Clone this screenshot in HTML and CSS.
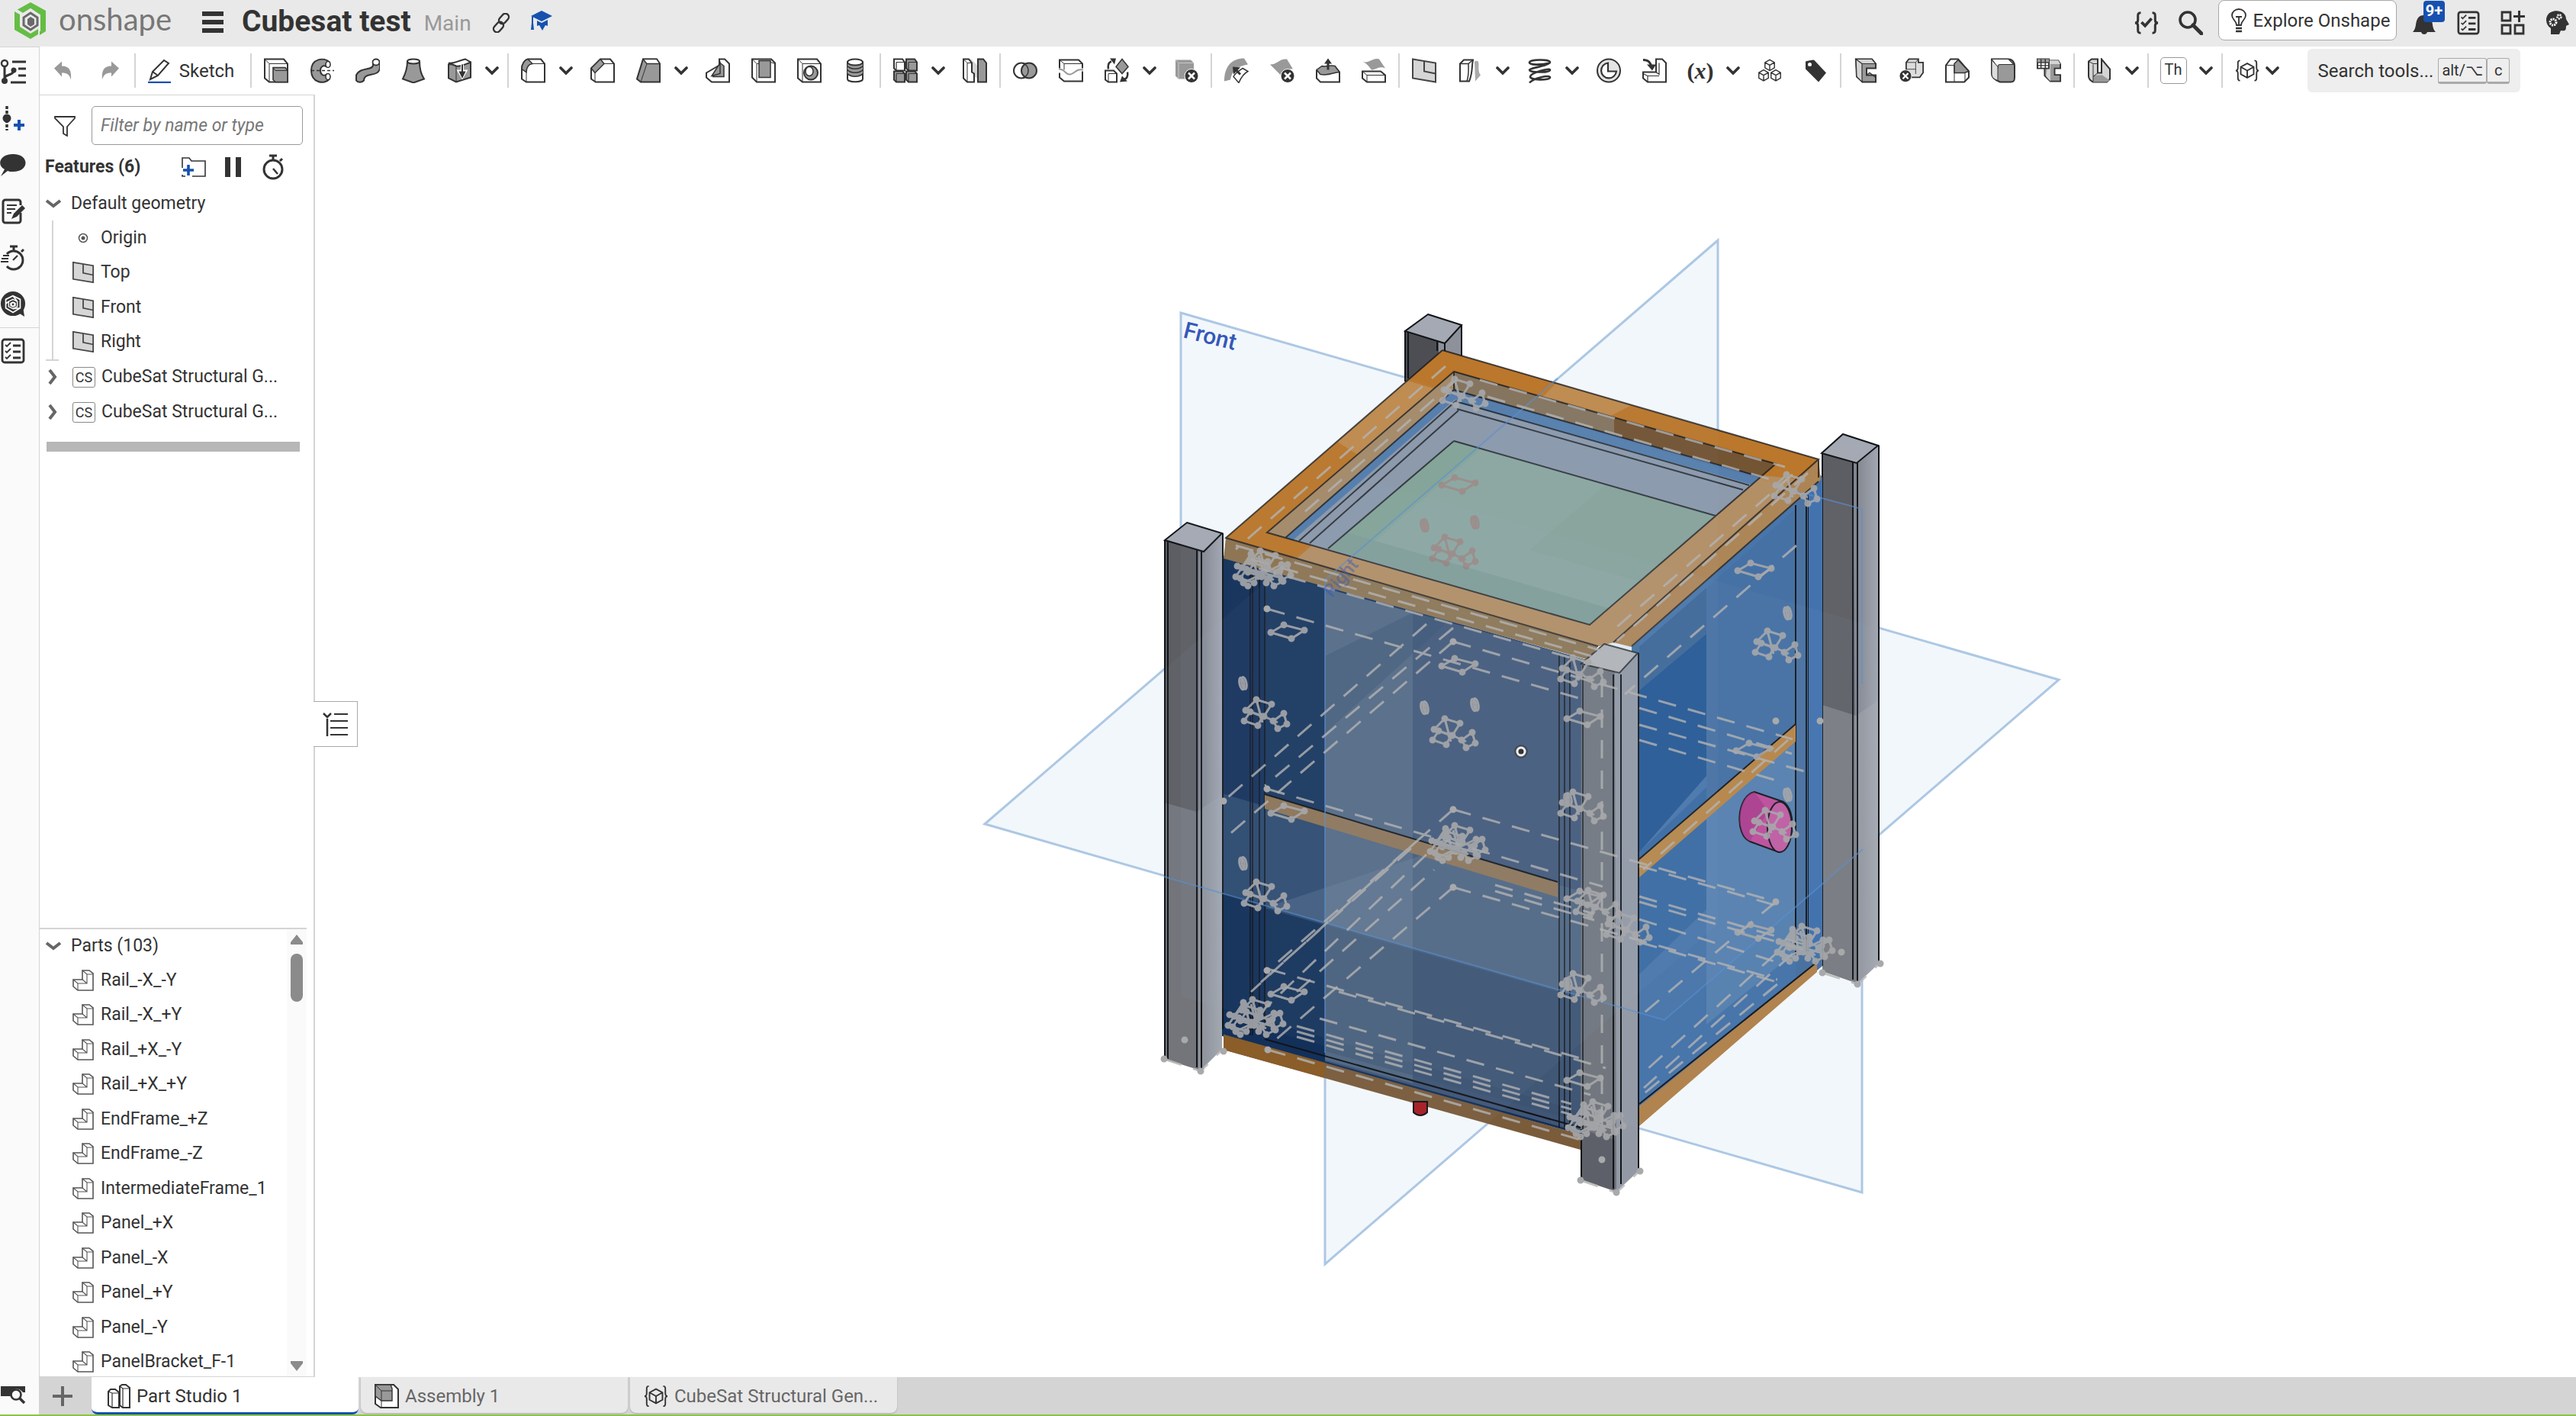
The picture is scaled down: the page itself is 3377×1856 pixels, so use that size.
FILE: index.html
```html
<!DOCTYPE html>
<html lang="en">
<head>
<meta charset="utf-8">
<title>Cubesat test | Part Studio 1</title>
<link rel="stylesheet" href="styles.css">
</head>
<body>
<svg class="defs" aria-hidden="true">
<defs>
<symbol id="i-caret" viewBox="0 0 18 12"><path d="M2 2l7 7 7-7" fill="none" stroke="#333" stroke-width="3.6" stroke-linecap="round"/></symbol>
<symbol id="i-undo" viewBox="0 0 32 32"><path d="M4 13L14 4v6c10 0 13 6 12 18-2-7-5-9-12-9v5z" fill="#999"/></symbol>
<symbol id="i-redo" viewBox="0 0 32 32"><path d="M28 13L18 4v6C8 10 5 16 6 28c2-7 5-9 12-9v5z" fill="#999"/></symbol>
<symbol id="i-pencil" viewBox="0 0 32 32"><path d="M4 27l3-10L22 2l6 4-14 16zM7 17l7 5" fill="#fff" stroke="#333" stroke-width="2"/><path d="M1 31h30" stroke="#1651b0" stroke-width="2.5"/></symbol>
<symbol id="i-extrude" viewBox="0 0 32 32"><path d="M1 1h25l5 6v24H7l-6-5z" fill="#fff" stroke="#333" stroke-width="2"/><path d="M1 1l6 6h24M7 7v24" fill="none" stroke="#333"/><path d="M12 12h16l3 4v15H15l-3-3z" fill="#999" stroke="#333" stroke-width="1.6"/><path d="M12 12l3 4h16" fill="none" stroke="#333"/></symbol>
<symbol id="i-revolve" viewBox="0 0 32 32"><path d="M26 5C19-2 2 0 2 16s17 19 24 11l-4-6c-4 3-8 0-8-5s4-8 8-5z" fill="#999" stroke="#333" stroke-width="2"/><ellipse cx="24" cy="8" rx="3" ry="4" fill="#fff" stroke="#333" stroke-width="1.6"/><ellipse cx="24" cy="24" rx="3" ry="4" fill="#fff" stroke="#333" stroke-width="1.6"/><path d="M2 16h30" stroke="#333" stroke-width="1.6" stroke-dasharray="4 3"/></symbol>
<symbol id="i-sweep" viewBox="0 0 32 32"><path d="M23 4v5c0 7-17 2-22 13v7c2 3 7 3 10 0 0-12 20-3 21-17V4z" fill="#999" stroke="#333" stroke-width="2"/><ellipse cx="27" cy="5" rx="4.500" ry="4" fill="#fff" stroke="#333" stroke-width="1.8"/></symbol>
<symbol id="i-loft" viewBox="0 0 32 32"><path d="M8 4c0 10-3 17-6 23l14 5 14-5c-4-6-6-13-6-23z" fill="#999" stroke="#333" stroke-width="2"/><ellipse cx="16" cy="4" rx="8" ry="3" fill="#fff" stroke="#333" stroke-width="2"/></symbol>
<symbol id="i-thicken" viewBox="0 0 32 32"><path d="M2 8v18l10 5 19-6V5z" fill="#999" stroke="#333" stroke-width="2"/><path d="M2 6c6 2 12-3 22-5l7 4c-8 3-12 6-19 5z" fill="#fff" stroke="#333" stroke-width="2"/><path d="M12 10v21" stroke="#333"/><path d="M20 8v14m-4-5l4 7 4-7z" stroke="#fff" stroke-width="4" fill="#fff"/><path d="M20 8v12m-3-2h6l-3 6z" stroke="#333" stroke-width="2" fill="#333"/></symbol>
<symbol id="i-fillet" viewBox="0 0 32 32"><path d="M9 1h17l5 6v24H7l-6-4V14C1 7 5 2 9 1z" fill="#fff" stroke="#333" stroke-width="2"/><path d="M9 1l6 6C9 8 7 13 7 18l-6-4C1 7 5 2 9 1z" fill="#999" stroke="#333" stroke-width="1.500"/><path d="M15 7h16M7 18v13" stroke="#333"/></symbol>
<symbol id="i-chamfer" viewBox="0 0 32 32"><path d="M13 1h13l5 6v24H7l-6-4V13z" fill="#fff" stroke="#333" stroke-width="2"/><path d="M13 1l5 6L6 19l-5-6z" fill="#999" stroke="#333" stroke-width="1.500"/><path d="M18 7h13M6 19v12" stroke="#333"/></symbol>
<symbol id="i-draft" viewBox="0 0 32 32"><path d="M9 1h18l4 6v24H6l-5-4z" fill="#999" stroke="#333" stroke-width="2"/><path d="M9 1l5 6h17l-4-6z" fill="#fff" stroke="#333" stroke-width="1.400"/><path d="M14 7L6 31" stroke="#333"/></symbol>
<symbol id="i-rib" viewBox="0 0 32 32"><path d="M18 1h7l6 6v24H8l-7-6v-6l17-10z" fill="#fff" stroke="#333" stroke-width="2"/><path d="M19 6v14L8 23zM19 6l5 4v14H9" fill="#999" stroke="#333" stroke-width="1.500"/></symbol>
<symbol id="i-shell" viewBox="0 0 32 32"><path d="M1 1h25l5 5v25H7l-6-6z" fill="#fff" stroke="#333" stroke-width="2"/><path d="M10 3h15v22H10z" fill="#999" stroke="#333" stroke-width="1.500"/><path d="M1 1l6 6v24M25 5l6 2M7 7h3" fill="none" stroke="#333"/></symbol>
<symbol id="i-hole" viewBox="0 0 32 32"><path d="M1 1h25l5 6v24H7l-6-5z" fill="#fff" stroke="#333" stroke-width="2"/><path d="M1 1l6 6h24M7 7v24" fill="none" stroke="#333"/><ellipse cx="18" cy="19" rx="9" ry="9" fill="#999" stroke="#333" stroke-width="2"/><ellipse cx="16" cy="17" rx="5" ry="6" fill="#fff" stroke="#333" stroke-width="1.500"/></symbol>
<symbol id="i-thread" viewBox="0 0 32 32"><path d="M6 5v22c0 5 20 5 20 0V5z" fill="#fff" stroke="#333" stroke-width="2"/><path d="M6 8v12c4 5 16 5 20 0V8z" fill="#999"/><ellipse cx="16" cy="5" rx="10" ry="4" fill="#fff" stroke="#333" stroke-width="2"/><path d="M6 10c4 5 16 5 20 0M6 15c4 5 16 5 20 0M6 20c4 5 16 5 20 0" fill="none" stroke="#333" stroke-width="1.600"/></symbol>
<symbol id="i-pattern" viewBox="0 0 32 32"><g stroke="#333" stroke-width="2"><path d="M1 1h11l3 4v11H4l-3-3z" fill="#fff"/><path d="M17 1h11l3 4v11H20l-3-3zM1 17h11l3 3v11H4l-3-3zM17 17h11l3 3v11H20l-3-3z" fill="#999"/></g><path d="M4 5h11M4 5v11M20 5h11M20 5v11M4 20h11M4 20v11M20 20h11M20 20v11" stroke="#333" stroke-width="1.200" fill="none"/></symbol>
<symbol id="i-mirror" viewBox="0 0 32 32"><path d="M10 0l12 12v16l-12-8z" fill="#d4d4d4"/><path d="M1 1h7l4 5v12l3 2v11H6l-5-5z" fill="#fff" stroke="#333" stroke-width="2"/><path d="M6 6v25M1 1l5 5h6" fill="none" stroke="#333"/><path d="M20 1h7l4 5v25H20z" fill="#999" stroke="#333" stroke-width="2"/></symbol>
<symbol id="i-boolean" viewBox="0 0 32 32"><circle cx="11" cy="16" r="10" fill="#fff" stroke="#333" stroke-width="2"/><circle cx="21" cy="16" r="10" fill="#999" stroke="#333" stroke-width="2"/><path d="M16 8a10 10 0 0 1 0 16" fill="none" stroke="#333" stroke-width="1.500"/></symbol>
<symbol id="i-split" viewBox="0 0 32 32"><path d="M1 13V2h25l5 5v6M1 19v6l6 5h24V17" fill="none" stroke="#333" stroke-width="2"/><path d="M1 2l6 5h24M7 7v8" fill="none" stroke="#333"/><path d="M0 14c9 0 8 8 15 7s7-8 17-6" fill="none" stroke="#999" stroke-width="2"/></symbol>
<symbol id="i-transform" viewBox="0 0 32 32"><path d="M23 1l8 10-8 9-8-9z" fill="#999" stroke="#333" stroke-width="1.500"/><path d="M1 16h11l4 4v11H5l-4-3z" fill="#fff" stroke="#333" stroke-width="2"/><path d="M5 20h11M5 20v11" stroke="#333"/><path d="M5 14c-1-6 1-9 4-10M30 18c1 5-1 9-4 9" fill="none" stroke="#333" stroke-width="2.500"/><path d="M7 0h8l-2 8zM20 31l3-8 7 7z" fill="#333"/></symbol>
<symbol id="i-delete" viewBox="0 0 32 32"><path d="M2 2h20l4 4v21H6l-4-4z" fill="#999"/><path d="M2 2l4 4h20M6 6v21" stroke="#c8c8c8" fill="none"/><circle cx="23" cy="23" r="9" fill="#333" stroke="#fff"/><path d="M19 19l8 8m0-8l-8 8" stroke="#fff" stroke-width="2.500"/></symbol>
<symbol id="i-moveface" viewBox="0 0 32 32"><path d="M0 30C0 10 10 0 26 0l5 8C18 10 10 16 8 28z" fill="#999"/><path d="M12 24c3-6 8-8 12-11l7 4c-6 3-9 8-12 15z" fill="#fff" stroke="#333" stroke-width="1.500"/><path d="M21 21L15 15" stroke="#333" stroke-width="3"/><path d="M11 11l10 1-9 9z" fill="#333"/></symbol>
<symbol id="i-deleteface" viewBox="0 0 32 32"><path d="M0 8c10 0 12-8 22-7l8 13c-8-2-8 10-16 8z" fill="#999"/><circle cx="23" cy="23" r="9" fill="#333" stroke="#fff"/><path d="M19 19l8 8m0-8l-8 8" stroke="#fff" stroke-width="2.500"/></symbol>
<symbol id="i-offsetface" viewBox="0 0 32 32"><path d="M1 16l6-4h19l5 6v13H6l-5-5z" fill="#fff" stroke="#333" stroke-width="2"/><path d="M1 15l7-5c5 2 9-2 17 0l6 8c-8 0-12 5-25 3z" fill="#999" stroke="#333" stroke-width="1.500"/><path d="M16 15V5" stroke="#333" stroke-width="3"/><path d="M11 7h10l-5-7z" fill="#333"/></symbol>
<symbol id="i-replaceface" viewBox="0 0 32 32"><path d="M1 4c8 4 14-6 22-3l8 12c-8-4-12 2-18 2C10 11 6 6 1 4z" fill="#999"/><path d="M1 17h24l6 5v9H7l-6-5z" fill="#fff" stroke="#333" stroke-width="2"/><path d="M1 17l6 5h24M7 22v9" stroke="#333" fill="none"/></symbol>
<symbol id="i-plane" viewBox="0 0 32 32"><path d="M1 1l30 5v25L1 26z" fill="#d6d6d6" stroke="#444" stroke-width="2"/><path d="M16 4v13l15 3" fill="none" stroke="#444" stroke-width="2"/></symbol>
<symbol id="i-ref" viewBox="0 0 32 32"><path d="M22 4c10-4 2 10 8 18l-7 8z" fill="#aaa"/><path d="M3 7l5-5h12c-2 9 0 16-5 28H3z" fill="#fff" stroke="#333" stroke-width="2"/><path d="M3 7h11l6-5M14 7c0 9 1 14-2 23" fill="none" stroke="#333" stroke-width="1.500"/></symbol>
<symbol id="i-helix" viewBox="0 0 32 32"><path d="M30 6C18 9 2 9 3 5s27-4 27 0-27 8-27 10 6 3 12 3 15 0 15-3-26 4-26 9 26 5 26 1-22 1-27 7" fill="none" stroke="#333" stroke-width="2.600"/></symbol>
<symbol id="i-clock" viewBox="0 0 32 32"><circle cx="16" cy="16" r="15" fill="#e4e4e4" stroke="#333" stroke-width="2"/><path d="M15 6a10 10 0 1 0 11 11H15z" fill="#fff" stroke="#333" stroke-width="2.200"/></symbol>
<symbol id="i-derive" viewBox="0 0 32 32"><path d="M18 1h8l5 5v25H7l-6-5v-8h11l6 0z" fill="#fff" stroke="#333" stroke-width="2"/><path d="M18 18l4 3V6M1 20l6 3h15M7 23v8" fill="none" stroke="#333" stroke-width="1.200"/><path d="M1 2c7 0 10 3 11 10" fill="none" stroke="#333" stroke-width="3"/><path d="M6 8h12l-5 8z" fill="#333"/></symbol>
<symbol id="i-cubes" viewBox="0 0 36 32"><g fill="#fff" stroke="#333" stroke-width="1.600"><path d="M18 0l7 4v8l-7 4-7-4V4zM11 4l7 4 7-4M18 8v8M9 15l7 4v8l-7 4-7-4v-8zM2 19l7 4 7-4M9 23v8M27 15l7 4v8l-7 4-7-4v-8zM20 19l7 4 7-4M27 23v8"/></g></symbol>
<symbol id="i-tag" viewBox="0 0 32 32"><path d="M3 4c4-1 7-2 11-2l16 17-10 12L3 14z" fill="#333"/><circle cx="8.500" cy="8" r="2.500" fill="#fff"/></symbol>
<symbol id="i-sheet" viewBox="0 0 32 32"><path d="M3 1h21l5 6v6H17v9h12v9H12l-8-7z" fill="#999" stroke="#333" stroke-width="2"/><path d="M3 1h21l5 6H11zM3 1l8 6v24l-7-7z" fill="#d4d4d4" stroke="#333" stroke-width="1.200"/><path d="M17 22l4-3 8 6" fill="none" stroke="#333" stroke-width="1.500"/></symbol>
<symbol id="i-sheetdel" viewBox="0 0 36 34"><path d="M10 5l4-5h14v5h7v15l-5 7H10z" fill="#ddd" stroke="#333" stroke-width="2"/><path d="M10 5h14l4-5M24 5v17M10 15h14" fill="none" stroke="#333"/><circle cx="9" cy="25" r="9" fill="#333" stroke="#fff"/><path d="M5 21l8 8m0-8l-8 8" stroke="#fff" stroke-width="2.500"/></symbol>
<symbol id="i-corner" viewBox="0 0 32 32"><path d="M1 9l6-8h10l14 16v8l-6 6H1z" fill="#fff" stroke="#333" stroke-width="2"/><path d="M12 7l5-5 14 15-6 2H12z" fill="#999" stroke="#333" stroke-width="1.500"/><path d="M1 9h11v22M12 19h14v12" fill="none" stroke="#333"/></symbol>
<symbol id="i-bend" viewBox="0 0 32 32"><path d="M1 1h22c5 0 8 4 8 9v15c0 4-1 6-5 6H12C4 28 1 24 1 20z" fill="#999" stroke="#333" stroke-width="2"/><path d="M1 1h22l7 7H12c-3 0-3 2-3 4L1 1z" fill="#fff" stroke="#333" stroke-width="1.200"/><path d="M1 2l8 9v18C3 27 1 24 1 20z" fill="#ddd" stroke="#333"/></symbol>
<symbol id="i-table" viewBox="0 0 34 32"><path d="M16 2h14l3 5v6h-8v9h8v9H19l-8-8V14z" fill="#999" stroke="#333" stroke-width="2"/><path d="M16 2h14l3 5H19v24l-6-7z" fill="#d4d4d4"/><path d="M1 0h16v13H1z" fill="#fff" stroke="#333" stroke-width="2"/><path d="M1 0h16v5H1z" fill="#999"/><path d="M1 5h16M1 9h16M6 0v13M12 0v13" stroke="#333" stroke-width="1.500"/></symbol>
<symbol id="i-frame" viewBox="0 0 32 32"><path d="M2 4l4-3h8v18h5V1l11 13v13l-4 4H8c-4-2-6-4-6-8z" fill="#d4d4d4" stroke="#333" stroke-width="2"/><path d="M8 22h12l10 7-4 2H8z" fill="#999"/><path d="M8 8v22M2 4l6 3h6M14 19l-6 5" fill="none" stroke="#333"/></symbol>
<symbol id="i-fcube" viewBox="0 0 34 30"><path d="M7 1C4 1 4 3 4 6v5c0 2-1 4-3 4 2 0 3 2 3 4v5c0 3 0 5 3 5M27 1c3 0 3 2 3 5v5c0 2 1 4 3 4-2 0-3 2-3 4v5c0 3 0 5-3 5" fill="none" stroke="#333" stroke-width="2"/><path d="M17 5l9 5v10l-9 5-9-5V10zM8 10l9 5 9-5M17 15v10" fill="none" stroke="#333" stroke-width="2"/></symbol>
<symbol id="i-check" viewBox="0 0 34 32"><path d="M9 2C5 2 5 4 5 7v5c0 2-1 4-4 4 3 0 4 2 4 4v5c0 3 0 5 4 5M25 2c4 0 4 2 4 5v5c0 2 1 4 4 4-3 0-4 2-4 4v5c0 3 0 5-4 5" fill="none" stroke="#333" stroke-width="3.200"/><path d="M10 15l5 5 9-10" fill="none" stroke="#333" stroke-width="4"/></symbol>
<symbol id="i-search" viewBox="0 0 32 32"><circle cx="12" cy="12" r="10" fill="none" stroke="#333" stroke-width="3.600"/><path d="M19 19l11 11" stroke="#333" stroke-width="5" stroke-linecap="round"/></symbol>
<symbol id="i-bulb" viewBox="0 0 20 32"><path d="M7 22c0-6-6-7-6-13a9 8 0 0 1 18 0c0 6-6 7-6 13zM6 11h8M10 11v11" fill="none" stroke="#333" stroke-width="1.800"/><path d="M6 26h8M6 30h8" stroke="#333" stroke-width="2.400"/></symbol>
<symbol id="i-bell" viewBox="0 0 32 32"><path d="M1 28c5-5 3-11 6-17 2-4 5-5 9-5s7 1 9 5c3 6 1 12 6 17H20c-1 4-7 4-8 0z" fill="#333"/></symbol>
<symbol id="i-list" viewBox="0 0 32 34"><rect x="2" y="2" width="28" height="30" rx="3" fill="none" stroke="#333" stroke-width="2.800"/><path d="M6 9l2 2 5-5M6 17l2 2 5-5M6 25l2 2 5-5" fill="none" stroke="#333" stroke-width="1.800"/><path d="M16 10h10M16 18h10M16 26h10" stroke="#333" stroke-width="3"/></symbol>
<symbol id="i-apps" viewBox="0 0 32 32"><path d="M2 2h11v11H2zM2 19h11v11H2zM19 19h11v11H19z" fill="none" stroke="#333" stroke-width="2.800"/><path d="M24.500 0v15M17 7.500h15" stroke="#333" stroke-width="3"/></symbol>
<symbol id="i-head" viewBox="0 0 32 32"><path d="M8 31v-8C0 18 0 6 8 2c8-4 20-1 20 9l4 7-4 2c0 6-1 7-7 6l-2 5z" fill="#333"/><circle cx="11" cy="15" r="4" fill="none" stroke="#fff" stroke-width="3" stroke-dasharray="2 1"/><circle cx="19" cy="8" r="2.500" fill="none" stroke="#fff" stroke-width="2.500" stroke-dasharray="2 1"/></symbol>
<symbol id="i-link" viewBox="0 0 26 26"><g fill="none" stroke="#333" stroke-width="2.400"><rect x="12" y="0" width="9" height="15" rx="4.500" transform="rotate(42 16.500 7.500)"/><rect x="5" y="11" width="9" height="15" rx="4.500" transform="rotate(42 9.500 18.500)"/></g></symbol>
<symbol id="i-grad" viewBox="0 0 28 26"><path d="M14 0l14 7-14 7L0 7z" fill="#1651b0"/><path d="M8 13l6 3 8-4v8l-3-1-4 7-4-7-3 1zM1 8h2v8l1 9H0l1-9z" fill="#1651b0"/></symbol>
<symbol id="i-tree" viewBox="0 0 34 32"><circle cx="6" cy="5" r="4" fill="none" stroke="#333" stroke-width="2.400"/><path d="M6 9v18M6 24c2-5 11-3 12-9" fill="none" stroke="#333" stroke-width="3"/><circle cx="6" cy="28" r="4" fill="#333"/><circle cx="18" cy="14" r="3.500" fill="#333"/><path d="M16 3h18M24 12h10M24 21h10M14 30h20" stroke="#333" stroke-width="3.200"/></symbol>
<symbol id="i-insert" viewBox="0 0 34 32"><path d="M9 0v32" stroke="#333" stroke-width="3.500" stroke-dasharray="4 2"/><circle cx="9" cy="16" r="5.500" fill="#333"/><path d="M25 18v14M18 25h14" stroke="#1651b0" stroke-width="4"/></symbol>
<symbol id="i-comment" viewBox="0 0 34 32"><path d="M17 2c22 0 22 23 0 23-3 0-5 0-7-1L1 31l5-9C-5 16 0 2 17 2z" fill="#333"/></symbol>
<symbol id="i-notes" viewBox="0 0 34 34"><path d="M27 19v10a3 3 0 0 1-3 3H7a3 3 0 0 1-3-3V5a3 3 0 0 1 3-3h17a3 3 0 0 1 3 3v4" fill="none" stroke="#333" stroke-width="3"/><path d="M9 9h13M9 14h11M9 19h6" stroke="#333" stroke-width="2.200"/><path d="M15 27l3-7L29 9l4 4-11 11z" fill="#333"/></symbol>
<symbol id="i-timer" viewBox="0 0 34 34"><circle cx="17" cy="20" r="12" fill="none" stroke="#333" stroke-width="3"/><path d="M12 2h10M17 2v6M26 9l3-3" stroke="#333" stroke-width="3"/><path d="M17 19l6 7" stroke="#333" stroke-width="2.500"/></symbol>
<symbol id="i-perf" viewBox="0 0 34 34"><path d="M9 12a12 12 0 1 1 0 16" fill="none" stroke="#333" stroke-width="3"/><path d="M13 2h10M18 2v5M28 9l3-3" stroke="#333" stroke-width="3"/><path d="M17 20l6-6M4 14h8M2 18h9M1 22h10" stroke="#333" stroke-width="2.200"/></symbol>
<symbol id="i-help" viewBox="0 0 34 36"><circle cx="17" cy="17" r="17" fill="#333"/><path d="M22 28l11 7-2-12z" fill="#333"/><path d="M17 6l10 5v12l-10 6-10-6V11zM17 6l6 8M27 23l-10 1M7 17l4-3" fill="none" stroke="#fff" stroke-width="1.800"/><path d="M17 11l6 3v7l-6 3-6-3v-7z" fill="none" stroke="#fff" stroke-width="1.500"/><path d="M17 14l4 2v4l-4 2-4-2v-4z" fill="#fff"/><circle cx="17" cy="18" r="1.500" fill="#333"/></symbol>
<symbol id="i-find" viewBox="0 0 34 26"><path d="M1 3h32v8h-3c-6-8-17-5-16 5H1z" fill="#333"/><circle cx="21" cy="14" r="6.500" fill="none" stroke="#333" stroke-width="2.600"/><path d="M26 19l6 6" stroke="#333" stroke-width="3.500"/></symbol>
<symbol id="i-filter" viewBox="0 0 28 28"><path d="M1 2h26v2L17 15v12l-5-3v-9L1 4z" fill="none" stroke="#333" stroke-width="1.800"/></symbol>
<symbol id="i-folder" viewBox="0 0 34 28"><path d="M2 15V2h9l3 4h18v20H15M2 24v2h4" fill="none" stroke="#333" stroke-width="1.600"/><path d="M10 11v14M3 18h14" stroke="#1651b0" stroke-width="3.600"/></symbol>
<symbol id="i-pause" viewBox="0 0 22 26"><path d="M0 0h7v26H0zM14 0h7v26h-7z" fill="#333"/></symbol>
<symbol id="i-part" viewBox="0 0 28 28"><path d="M13 1h9l5 4v22H7l-6-5v-9h12z" fill="#fff" stroke="#555" stroke-width="1.600"/><path d="M13 1l6 5h8M19 6v12H7l-6-5M7 18v9M13 13l6 5" fill="none" stroke="#555" stroke-width="1.100"/></symbol>
<symbol id="i-studio" viewBox="0 0 30 32"><path d="M1 10l3-3h6l5 4v20H6l-5-3zM16 3l3-2h5l5 4v26H20l-4-3z" fill="#fff" stroke="#333" stroke-width="2"/><path d="M1 10l5 2h9M6 12v19M16 3l4 3h9M20 6v25" fill="none" stroke="#333" stroke-width="1.200"/></symbol>
<symbol id="i-assembly" viewBox="0 0 32 32"><path d="M1 1h24l6 6v24H8l-7-5z" fill="#fff" stroke="#333" stroke-width="2"/><path d="M1 1h20l2 5v16H9l-8-6z" fill="#999" stroke="#333" stroke-width="1.400"/><path d="M1 1l8 8h14M9 9v22" fill="none" stroke="#333"/></symbol>
<symbol id="i-down" viewBox="0 0 22 12"><path d="M2 2l9 7 9-7" fill="none" stroke="#666" stroke-width="4"/></symbol>
<symbol id="i-right" viewBox="0 0 12 22"><path d="M2 2l7 9-7 9" fill="none" stroke="#666" stroke-width="4"/></symbol>

<g id="sq" class="wire"><path d="M-22 0L-5-10 22-3 5 8z"/><path class="dot" d="M-22 0h0M-5-10h0M22-3h0M5 8h0"/></g>
<g id="coil" class="wire"><ellipse cx="0" cy="0" rx="3" ry="8" transform="rotate(-12)"/><ellipse cx="3" cy="0" rx="3" ry="8" transform="rotate(-12)"/></g>
<g id="clus" class="wire"><path d="M-22-4L-8-18 12-12 2 4zM-24 10l8-12 16 6-6 12zM14 10l14-10 4 14-12 6zM-8-18l8 30M2 4l18 8"/><path class="dot" d="M-22-4h0M-8-18h0M12-12h0M2 4h0M-24 10h0M-16-2h0M0 4h0M-6 16h0M14 10h0M28 0h0M32 14h0M20 20h0"/></g>
<g id="dense" class="wire"><use href="#clus"/><use href="#clus" x="10" y="-8"/><path d="M-30 8l20-30M-20 16L30-8M0-20l10 36M-28-6l60 16"/><path class="dot" d="M-30 8h0M-10-22h0M-20 16h0M30-8h0M10 16h0M-28-6h0M-14 20h0"/></g>
<linearGradient id="steel"><stop offset="0" stop-color="#7e828b"/><stop offset="1" stop-color="#a2a7b1"/></linearGradient>
</defs>
</svg>

<header class="topbar">
  <a class="brand" href="#"><svg class="logo" viewBox="0 0 42 48"><path d="M21 0l20 11v27l-8 5V16L21 9 11 15l-8-5z" fill="#64bd45"/><path d="M0 12l7 4v16l14 9 10-6v7L21 48 0 36z" fill="#64bd45"/><path d="M3 10l8 5 10-6 12 8v21" fill="none" stroke="#e9e9e9" stroke-width="2"/><path d="M21 14l9 6v10l-9 6-9-6V20z" fill="none" stroke="#696969" stroke-width="3"/><path d="M21 19l5 3v7l-5 3-4-3v-7z" fill="#696969"/></svg><span>onshape</span></a>
  <button class="burger" aria-label="Menu"><i></i><i></i><i></i></button>
  <h1>Cubesat test</h1><span class="branch">Main</span>
  <button class="ib link" aria-label="Share link"><svg><use href="#i-link"/></svg></button>
  <button class="ib grad" aria-label="Education"><svg><use href="#i-grad"/></svg></button>
  <div class="topright">
    <button class="ib" aria-label="Custom features"><svg><use href="#i-check"/></svg></button>
    <button class="ib" aria-label="Search"><svg><use href="#i-search"/></svg></button>
    <button class="explore"><svg><use href="#i-bulb"/></svg>Explore Onshape</button>
    <button class="ib bell" aria-label="Notifications"><svg><use href="#i-bell"/></svg><b>9+</b></button>
    <button class="ib" aria-label="Tasks"><svg><use href="#i-list"/></svg></button>
    <button class="ib" aria-label="Apps"><svg><use href="#i-apps"/></svg></button>
    <button class="ib" aria-label="Account"><svg><use href="#i-head"/></svg></button>
  </div>
</header>

<div class="work">
<nav class="rail">
  <button aria-label="Feature list"><svg><use href="#i-tree"/></svg></button>
  <button aria-label="Insert"><svg><use href="#i-insert"/></svg></button>
  <button aria-label="Comments"><svg><use href="#i-comment"/></svg></button>
  <button aria-label="Notes"><svg><use href="#i-notes"/></svg></button>
  <button aria-label="Performance"><svg><use href="#i-perf"/></svg></button>
  <button aria-label="Advisor"><svg><use href="#i-help"/></svg></button>
  <button class="split" aria-label="Checklist"><svg><use href="#i-list"/></svg></button>
  <button class="last" aria-label="Find tabs"><svg><use href="#i-find"/></svg></button>
</nav>
<main>
<div class="tools" role="toolbar">
  <button class="t hist" aria-label="Undo"><svg><use href="#i-undo"/></svg></button><button class="t hist" aria-label="Redo"><svg><use href="#i-redo"/></svg></button><hr>
  <button class="sketch"><svg><use href="#i-pencil"/></svg>Sketch</button><hr>
  <button class="t" aria-label="Extrude"><svg><use href="#i-extrude"/></svg></button><button class="t" aria-label="Revolve"><svg><use href="#i-revolve"/></svg></button><button class="t" aria-label="Sweep"><svg><use href="#i-sweep"/></svg></button><button class="t" aria-label="Loft"><svg><use href="#i-loft"/></svg></button><button class="t" aria-label="Thicken"><svg><use href="#i-thicken"/></svg></button><button class="c" aria-label="More solids"><svg><use href="#i-caret"/></svg></button><hr>
  <button class="t" aria-label="Fillet"><svg><use href="#i-fillet"/></svg></button><button class="c" aria-label="More fillets"><svg><use href="#i-caret"/></svg></button><button class="t" aria-label="Chamfer"><svg><use href="#i-chamfer"/></svg></button><button class="t" aria-label="Draft"><svg><use href="#i-draft"/></svg></button><button class="c" aria-label="More drafts"><svg><use href="#i-caret"/></svg></button><button class="t" aria-label="Rib"><svg><use href="#i-rib"/></svg></button><button class="t" aria-label="Shell"><svg><use href="#i-shell"/></svg></button><button class="t" aria-label="Hole"><svg><use href="#i-hole"/></svg></button><button class="t" aria-label="Thread"><svg><use href="#i-thread"/></svg></button><hr>
  <button class="t" aria-label="Pattern"><svg><use href="#i-pattern"/></svg></button><button class="c" aria-label="More patterns"><svg><use href="#i-caret"/></svg></button><button class="t" aria-label="Mirror"><svg><use href="#i-mirror"/></svg></button><hr>
  <button class="t" aria-label="Boolean"><svg><use href="#i-boolean"/></svg></button><button class="t" aria-label="Split"><svg><use href="#i-split"/></svg></button><button class="t" aria-label="Transform"><svg><use href="#i-transform"/></svg></button><button class="c" aria-label="More transforms"><svg><use href="#i-caret"/></svg></button><button class="t" aria-label="Delete part"><svg><use href="#i-delete"/></svg></button><hr>
  <button class="t" aria-label="Move face"><svg><use href="#i-moveface"/></svg></button><button class="t" aria-label="Delete face"><svg><use href="#i-deleteface"/></svg></button><button class="t" aria-label="Offset face"><svg><use href="#i-offsetface"/></svg></button><button class="t" aria-label="Replace face"><svg><use href="#i-replaceface"/></svg></button><hr>
  <button class="t" aria-label="Plane"><svg><use href="#i-plane"/></svg></button><button class="t" aria-label="Surface"><svg><use href="#i-ref"/></svg></button><button class="c" aria-label="More surfaces"><svg><use href="#i-caret"/></svg></button><button class="t" aria-label="Helix"><svg><use href="#i-helix"/></svg></button><button class="c" aria-label="More curves"><svg><use href="#i-caret"/></svg></button><button class="t" aria-label="History"><svg><use href="#i-clock"/></svg></button><button class="t" aria-label="Derive"><svg><use href="#i-derive"/></svg></button><button class="t var" aria-label="Variable">(<i>x</i>)</button><button class="c" aria-label="More variables"><svg><use href="#i-caret"/></svg></button><button class="t" aria-label="Composite part"><svg><use href="#i-cubes"/></svg></button><button class="t" aria-label="Tag"><svg><use href="#i-tag"/></svg></button><hr>
  <button class="t" aria-label="Sheet metal"><svg><use href="#i-sheet"/></svg></button><button class="t" aria-label="Finish sheet metal"><svg><use href="#i-sheetdel"/></svg></button><button class="t" aria-label="Corner"><svg><use href="#i-corner"/></svg></button><button class="t" aria-label="Bend"><svg><use href="#i-bend"/></svg></button><button class="t" aria-label="Sheet metal table"><svg><use href="#i-table"/></svg></button><hr>
  <button class="t" aria-label="Frame"><svg><use href="#i-frame"/></svg></button><button class="c" aria-label="More frames"><svg><use href="#i-caret"/></svg></button><hr>
  <button class="t th"><span>Th</span></button><button class="c" aria-label="More thread tools"><svg><use href="#i-caret"/></svg></button><hr>
  <button class="t" aria-label="Featurescript"><svg><use href="#i-fcube"/></svg></button><button class="c near" aria-label="More custom features"><svg><use href="#i-caret"/></svg></button>
  <button class="find">Search tools... <kbd>alt/⌥</kbd><kbd>c</kbd></button>
</div>

<div class="stage">
<aside class="panel">
  <section class="features">
    <div class="filter"><svg><use href="#i-filter"/></svg><input type="text" aria-label="Filter" placeholder="Filter by name or type"></div>
    <div class="head"><h2>Features (6)</h2><button aria-label="New folder"><svg class="fold"><use href="#i-folder"/></svg></button><button aria-label="Pause"><svg class="pause"><use href="#i-pause"/></svg></button><button aria-label="Timing"><svg><use href="#i-timer"/></svg></button></div>
    <div class="group"><svg class="dn"><use href="#i-down"/></svg>Default geometry</div>
    <ul class="geo">
      <li><svg viewBox="0 0 28 28"><circle cx="14" cy="14" r="5.500" fill="none" stroke="#555" stroke-width="1.500"/><circle cx="14" cy="14" r="2.500" fill="#555"/></svg>Origin</li>
      <li><svg><use href="#i-plane"/></svg>Top</li>
      <li><svg><use href="#i-plane"/></svg>Front</li>
      <li><svg><use href="#i-plane"/></svg>Right</li>
    </ul>
    <div class="feat"><svg><use href="#i-right"/></svg><span class="cs">CS</span>CubeSat Structural G...</div>
    <div class="feat"><svg><use href="#i-right"/></svg><span class="cs">CS</span>CubeSat Structural G...</div>
    <div class="rollback"></div>
  </section>
  <section class="parts">
    <div class="plist">
      <div class="group"><svg class="dn"><use href="#i-down"/></svg>Parts (103)</div>
      <ul>
        <li><svg><use href="#i-part"/></svg>Rail_-X_-Y</li>
        <li><svg><use href="#i-part"/></svg>Rail_-X_+Y</li>
        <li><svg><use href="#i-part"/></svg>Rail_+X_-Y</li>
        <li><svg><use href="#i-part"/></svg>Rail_+X_+Y</li>
        <li><svg><use href="#i-part"/></svg>EndFrame_+Z</li>
        <li><svg><use href="#i-part"/></svg>EndFrame_-Z</li>
        <li><svg><use href="#i-part"/></svg>IntermediateFrame_1</li>
        <li><svg><use href="#i-part"/></svg>Panel_+X</li>
        <li><svg><use href="#i-part"/></svg>Panel_-X</li>
        <li><svg><use href="#i-part"/></svg>Panel_+Y</li>
        <li><svg><use href="#i-part"/></svg>Panel_-Y</li>
        <li><svg><use href="#i-part"/></svg>PanelBracket_F-1</li>
      </ul>
    </div>
    <div class="scroll"><svg viewBox="0 0 16 13"><path d="M8 0l8 10v3H0v-3z"/></svg><i></i><svg class="end" viewBox="0 0 16 13"><path d="M8 13l8-10V0H0v3z"/></svg></div>
  </section>
</aside>

<div class="canvas">
<button class="collapse" aria-label="Toggle list"><svg viewBox="0 0 34 32"><path d="M1 2l5 5 5-5M6 9v23" fill="none" stroke="#333" stroke-width="2.500"/><path d="M15 3h18M10 12h23M10 21h23M10 30h23" stroke="#333" stroke-width="2"/></svg></button>
<svg class="model" viewBox="413 124 2964 1681" role="img" aria-label="CubeSat model">
  <!-- reference planes behind the body -->
  <g class="plane">
    <path d="M1548 410L2441 667V1563L1548 1306z"/>
    <path d="M2252 315L1737 760V1657L2252 1212z"/>
    <path d="M1291 1080L1808 634 2699 891 2182 1337z"/>
  </g>
  <!-- rear rail -->
  <path d="M1842 434l52 16v60h-52z" fill="#4d4e53"/><path d="M1886 447l30-21v50h-30z" fill="#8d919a"/>
  <path d="M1872 412l44 14-22 24-52-16z" fill="#a5a9b3" class="ink"/><path d="M1842 434v66M1846 436v60M1916 426v48M1884 448v12M1894 450v10" class="ink"/>
  <!-- right rail -->
  <path d="M2388 594l47 14v681l-46-16z" fill="#5d5e63"/><path d="M2429 604l34-20v679l-28 26z" fill="url(#steel)"/>
  <path d="M2389 924l44 14 30-20v345l-28 26-46-16z" fill="#b0b3b8" opacity=".35"/>
  <path d="M2416 569l46 15-28 23-46-13z" fill="#a5a9b3" class="ink"/><path d="M2389 594v672M2429 606v678M2435 607v680M2463 584v679" class="ink"/>
  <!-- right face -->
  <path d="M2139 848L2386 622l3 4v640l-240 184z" fill="#41709f"/>
  <path d="M2149 840L2386 629v632L2149 1450z" fill="#4472a8"/>
  <path d="M2149 848l88-77v246l-88 100z" fill="#205490"/>
  <path d="M2149 848l88-77v60l-88 74z" fill="#3a6494"/>
  <path d="M2237 771l117-104v337l-117 102z" fill="#426ea2"/>
  <path d="M2149 1117l88-85v160l-88 85z" fill="#3567a0"/>
  <path d="M2237 1060l117-102v290l-117 95z" fill="#557fae"/>
  <path d="M2354 657l35-31v640l-35 30z" fill="#466f9f"/>
  <path d="M2354 662v590M2368 650v598M2371 648v598" class="ink"/>
  <path d="M2371 646l18-16v622l-18 4z" fill="#3f70ad"/>
  <path d="M2149 1126l205-177v23l-205 178z" fill="#b98543"/><path d="M2149 1126l205-177" class="ink"/>
  <path d="M2149 1450l233-189v13l-233 202z" fill="#b08049"/><path d="M2149 1447l233-186" class="ink"/>
  <!-- front face -->
  <path d="M1602 728l488 140v624l-488-134z" fill="#13305a"/>
  <path d="M1658 748l79 23v600l-79-22z" fill="#18365d"/>
  <path d="M1737 771l353 97v621l-353-98z" fill="#405676"/>
  <path d="M1737 771l115 32v617l-115-31z" fill="#526883"/>
  <path d="M1852 803l48 10-163 148V860z" fill="#35506f" opacity=".5"/>
  <path d="M1658 1190l414 118v-140l-190-53z" fill="#72869c" opacity=".3"/>
  <path d="M1737 1210l335 95v165l-335-92z" fill="#38506f" opacity=".4"/>
  <path d="M1602 1040l135 40v130l-135-40z" fill="#6c89a8" opacity=".25"/>
  <path d="M1639 745v612M1642 745v612M1651 748v610M1658 750v600M2044 858v620M2051 860v620M2058 862v620" class="ink thin"/>
  <path d="M1658 1041l384 115v20l-384-116z" fill="#8d7355"/><path d="M1658 1041l384 115" class="ink"/>
  <path d="M1604 1356l468 131v20l-468-131z" fill="#7a5c3b"/><path d="M1604 1356l133 37v20l-133-37z" fill="#8a5d29"/><path d="M1658 1362l414 116" class="ink"/>
  <!-- top frame -->
  <path d="M1607 705l488 142-12 18-479-133z" fill="#8d734f"/>
  <path d="M2115 842l269-240 3 27-248 219z" fill="#ad8453"/>
  <path d="M1891 459L2384 602 2115 842 2095 847 1607 705z" fill="#bb772b"/>
  <path d="M1753 579L1845 499 1880 509 1780 596z" fill="#c08a4c"/>
  <path d="M2040 502L2139 531 2110 546 2022 521z" fill="#c08a4c"/>
  <path d="M1700 732L2095 847 2115 842 2355 628 2311 623 2084 819 1720 715z" fill="#b38d60"/>
  <path d="M1906 487l422 121-244 211-423-121z" fill="#8b98aa"/>
  <path d="M1906 487l422 121-20 17-402-114z" fill="#735433"/><path d="M1906 487l210 60v24l-210-60z" fill="#85755f"/>
  <path d="M1906 487l-245 211 24 7 221-194z" fill="#a58a69"/>
  <path d="M1906 511l402 114-12 10-388-108z" fill="#547cab"/><path d="M1906 511l-221 194 10 3 213-185z" fill="#547cab"/>
  <path d="M1906 578l343 98-165 143-343-100z" fill="#8ba69f"/>
  <path d="M1906 578l36 10-160 139-41-8z" fill="#84a497"/><path d="M1765 698L2108 797 2084 819 1741 719z" fill="#809e95"/><path d="M2105 635l144 41-100 86-144-41z" fill="#87a096" opacity=".6"/>
  <path d="M1891 459l493 143-269 240M1891 459L1607 705l488 142M1906 487l422 121-244 211-423-121zM1906 578l343 98M1906 578l-165 141M1906 487v24l402 114M1906 511l-221 194M1908 526l385 110M1910 536l375 106M1908 526l-205 183M1912 538l-195 174M2384 602v24M2139 847l245-216" class="ink thin"/>
  <!-- left rail -->
  <path d="M1527 708l51 15v678l-4 2-48-15z" fill="#5d5e63"/><path d="M1571 721l31-22v676l-28 28h-3z" fill="url(#steel)"/>
  <path d="M1526 1052l43 12 33-22v333l-28 28-48-15z" fill="#a7abb4" opacity=".3"/>
  <path d="M1556 685l46 14-24 24-51-15z" fill="#a5a9b3" class="ink"/><path d="M1527 708v678M1531 710v678M1569 721v678M1575 723v678M1603 699v650" class="ink"/>
  <!-- front rail -->
  <path d="M2073 870l50 12v676l-4 4-47-16z" fill="#70747b"/><path d="M2072 1480l45 14v67l-45-15z" fill="#5d6068"/><path d="M2117 882l30-26 2 678-30 28z" fill="#9399a4"/>
  <path d="M2103 844l44 12-24 26-50-12z" fill="#b5b6b8" class="ink thin"/><path d="M2073 1480v66M2115 884v674M2125 884v668M2148 856v680" class="ink"/><path d="M2075 872v610" class="ink thin"/>
  <!-- sensor and pin -->
  <path d="M2300 1038l38 13c18 12 14 58-6 66l-38-14c-20-8-18-60 6-65z" fill="#c04b9c" class="ink"/><path d="M2300 1038c-24 4-26 56-6 65l24-40z" fill="#9c2c7c" opacity=".5"/><ellipse cx="2333" cy="1084" rx="16" ry="33" fill="#c25aa2" class="ink"/>
  <path d="M1853 1444h18v14q-9 8-18 0z" fill="#a81d22" class="ink"/>
  <!-- plane tints over the body -->
  <g class="tint">
    <path d="M1548 410L2441 667V1563L1548 1306z"/>
    <path d="M2252 315L1737 760V1657L2252 1212z"/>
    <path d="M1291 1080L1808 634 2699 891 2182 1337z"/>
  </g>
  <g class="edge"><path d="M2042 496L1737 760v620M2340 640l101 27v230M1526 1149l656 188 260-224"/></g>
  <!-- hidden sketch lines -->
  <g class="dash">
    <path d="M1661 798l419 120M1905 841l445 128M1905 841L1610 1095M1905 823L1658 1030M1870 818L1604 1050"/>
    <path d="M1661 1034l440 128M1905 1061l420 120M1905 1061L1665 1270M1860 1100L1640 1300M1850 1112L1650 1290M1870 1120L1660 1320M1905 1163L1664 1370M1905 1163l425 121"/>
    <path d="M1755 1300l350 100M1730 1335l355 100M1700 1345l360 102M1700 1352l360 102M1700 1359l360 102M1662 1376l410 118M1662 1270l420 120"/>
    <path d="M2149 928l200 60M2149 950l220 62M2149 970l190 56M2149 1135l180 52M2149 1175l220 64M2149 1182l220 64M2149 1205l180 56M2149 1235l180 52"/>
    <path d="M2355 715L2130 910M2328 1182l-178 150M2328 1250l-178 160M2350 1250l-195 176M2330 1290l-178 146M2344 970l-190 170"/>
    <path d="M1940 498l400 114M1950 520l370 108M1895 480L1620 720M1910 497L1700 680M1620 715l480 138M1640 733l450 128M1650 745l440 126"/>
    <path d="M2370 620L2120 840M2350 622L2110 830M2100 890v600M1700 1300L1880 1140M1960 1160l130 38M1960 1168l130 38M1526 1388l48 16 28-28M2389 1275l46 15 30-28M2072 1547l47 16 30-28"/>
  </g>
  <g class="wires">
    <use href="#sq" x="1688" y="829"/><use href="#sq" x="1912" y="873"/><use href="#sq" x="2300" y="748"/><use href="#sq" x="2076" y="942"/><use href="#sq" x="2298" y="984"/><use href="#sq" x="1688" y="1066"/><use href="#sq" x="1688" y="1303"/><use href="#sq" x="2076" y="1178"/><use href="#sq" x="2076" y="1416"/><use href="#sq" x="2300" y="1222"/>
    <use href="#clus" x="1655" y="935"/><use href="#clus" x="1655" y="1174"/><use href="#clus" x="1902" y="960"/><use href="#clus" x="2070" y="1056"/><use href="#clus" x="2070" y="1294"/><use href="#clus" x="2325" y="845"/><use href="#clus" x="2322" y="1080"/>
    <use href="#coil" x="1866" y="928"/><use href="#coil" x="1932" y="924"/><use href="#coil" x="1628" y="896"/><use href="#coil" x="1628" y="1132"/><use href="#coil" x="2054" y="1048"/><use href="#coil" x="2054" y="1290"/><use href="#coil" x="2342" y="804"/><use href="#coil" x="2342" y="1042"/>
    <use href="#dense" x="1905" y="1108"/><use href="#dense" x="1640" y="1336"/><use href="#dense" x="2360" y="1240"/><use href="#dense" x="2086" y="1470"/><use href="#dense" x="1650" y="748"/><use href="#clus" x="1915" y="515"/><use href="#clus" x="2350" y="640"/><use href="#clus" x="2070" y="880"/><use href="#clus" x="2090" y="1185"/><use href="#clus" x="2130" y="1215"/>
  </g>
  <g class="wires red"><use href="#sq" x="1912" y="636"/><use href="#coil" x="1866" y="689"/><use href="#coil" x="1932" y="685"/><use href="#clus" x="1902" y="722"/></g>
  <path class="dots" d="M1526 1388h0M1574 1404h0M1604 1378h0M1553 1363h0M2389 1275h0M2435 1290h0M2465 1263h0M2414 1248h0M2072 1547h0M2119 1563h0M2150 1535h0M2100 1520h0M1604 1050h0M1661 1034h0M1661 1272h0M1905 1061h0M1905 1163h0M1905 841h0M1661 798h0M2328 945h0M2386 945h0M2328 1182h0M1662 1376h0"/>
  <circle cx="1994" cy="985" r="5" fill="#333" stroke="#eee" stroke-width="3"/><circle cx="1994" cy="985" r="8" fill="none" stroke="#444" stroke-width="1.500"/>
  <text class="lbl" transform="translate(1550 442) rotate(14)">Front</text>
  <text class="lbl dim" transform="translate(1746 784) rotate(-50)">Right</text>
</svg>
</div>
</div>

<div class="tabs">
  <button class="add" aria-label="Add tab"></button>
  <button class="tab on"><svg class="st"><use href="#i-studio"/></svg>Part Studio 1</button>
  <button class="tab"><svg><use href="#i-assembly"/></svg>Assembly 1</button>
  <button class="tab"><svg><use href="#i-fcube"/></svg>CubeSat Structural Gen...</button>
</div>
</main>
</div>
</body>
</html>
```
FILE: styles.css
```css
* { box-sizing: border-box; }
body { margin: 0; height: 100vh; display: flex; flex-direction: column; overflow: hidden; background: #fff; color: #333; font: 24px/28px Roboto, "Liberation Sans", sans-serif; border-bottom: 2px solid #8bc34a; }
.defs { position: absolute; width: 0; height: 0; }
button { font: inherit; color: inherit; background: none; border: 0; padding: 0; display: flex; align-items: center; justify-content: center; flex: none; }
svg { display: block; flex: none; }
ul { list-style: none; margin: 0; padding: 0; }
h1, h2 { margin: 0; }

.topbar { height: 61px; flex: none; background: #e9e9e9; display: flex; align-items: center; padding: 0 9px 8px 19px; }
.brand { display: flex; align-items: center; gap: 16px; color: #777; text-decoration: none; font: 40px/48px Lato, sans-serif; width: 246px; }
.brand span { padding-bottom: 4px; }
.logo { width: 42px; height: 48px; }
.burger { flex-direction: column; gap: 5px; width: 28px; margin-top: 4px; }
.burger i { height: 6px; width: 28px; background: #333; }
h1 { font-size: 39px; line-height: 48px; font-weight: 700; margin: 2px 0 0 24px; }
.branch { font-size: 28px; color: #999; margin: 8px 26px 0 17px; }
.link svg { width: 26px; height: 26px; }
.link { margin-top: 6px; }
.grad { margin-left: 26px; }
.grad svg { width: 28px; height: 26px; }
.topright { margin-left: auto; display: flex; align-items: center; gap: 26px; }
.topright .ib svg { width: 32px; height: 32px; }
.topright .ib { margin-top: 6px; }
.explore { height: 53px; background: #fff; border: 1px solid #a8a8a8; border-radius: 8px; padding: 0 6px 0 14px; gap: 9px; margin: 0 -6px; width: 234px; }
.explore svg { width: 20px; height: 32px; }
.bell { position: relative; }
.bell b { position: absolute; left: 15px; top: -13px; width: 28px; height: 28px; border-radius: 4px; background: #1651b0; color: #fff; font-size: 20px; line-height: 26px; }

.work { flex: 1; display: flex; min-height: 0; }
.rail { width: 52px; flex: none; background: #fafafa; border-right: 1px solid #d4d4d4; border-top: 1px solid #d4d4d4; display: flex; flex-direction: column; align-items: stretch; padding-top: 1px; }
.rail button { height: 61px; justify-content: flex-start; }
.rail svg { width: 34px; height: 34px; }
.rail .split { border-top: 1px solid #d4d4d4; }
.rail .last { margin-top: auto; height: 50px; }
.rail .last svg { height: 26px; margin-bottom: 4px; }
main { flex: 1; min-width: 0; display: flex; flex-direction: column; }

.tools { height: 63px; flex: none; display: flex; align-items: center; }
.tools hr { width: 2px; height: 45px; margin: 0 2px; border: 0; background: #d4d4d4; flex: none; }
.t { width: 60px; height: 45px; }
.t svg { width: 32px; height: 33px; }
.hist { width: 61px; }
.sketch { width: 146px; gap: 10px; padding-right: 6px; }
.sketch svg { width: 32px; height: 32px; }
.c { width: 31px; height: 45px; justify-content: flex-start; padding-left: 4px; }
.c svg { width: 18px; height: 12px; }
.near { margin-left: -10px; }
.var { font: bold 30px/30px "Liberation Serif", serif; }
.th span { width: 35px; height: 35px; border: 1px solid #999; border-radius: 5px; font-size: 20px; line-height: 30px; }
.find { height: 57px; width: 279px; margin-left: 28px; background: #eee; border-radius: 6px; white-space: pre; }
kbd { font: 20px/30px Roboto, "DejaVu Sans", sans-serif; border: 1px solid #aaa; border-bottom-width: 3px; border-radius: 3px; height: 34px; padding: 0 4px; }
kbd + kbd { padding: 0 9px; }

.stage { flex: 1; min-height: 0; display: flex; }
.panel { width: 361px; flex: none; border: solid #d4d4d4; border-width: 1px 2px 1px 0; display: flex; flex-direction: column; font-size: 23px; }
.features { flex: 1; min-height: 0; overflow: hidden; }
.filter { display: flex; align-items: center; gap: 21px; padding: 14px 14px 0 19px; }
.filter svg { width: 28px; height: 28px; }
input { flex: 1; min-width: 0; height: 51px; border: 1px solid #999; border-radius: 5px; padding: 0 11px; font: italic 23px/28px Roboto, sans-serif; color: #333; }
input::placeholder { color: #777; opacity: 1; }
.head { display: flex; align-items: center; height: 53px; padding: 0 36px 0 7px; margin-top: 2px; }
.head h2 { flex: 1; font-size: 23px; line-height: 28px; font-weight: 700; }
.head button { margin-left: 24px; }
.head svg { width: 34px; height: 34px; }
.head .fold { height: 28px; }
.head .pause { width: 22px; height: 26px; }
.group { display: flex; align-items: center; height: 44px; gap: 12px; padding-left: 7px; }
.dn { width: 22px; height: 12px; }
.geo { position: relative; }
.geo::before { content: ""; position: absolute; left: 8px; top: 0; width: 17px; height: 100%; border-bottom: 2px solid #d4d4d4; background: linear-gradient(#d4d4d4, #d4d4d4) 8px 0 / 2px 100% no-repeat; }
li { display: flex; align-items: center; height: 45px; gap: 9px; padding-left: 43px; white-space: nowrap; }
li:nth-child(even) { height: 46px; }
li svg { width: 28px; height: 28px; }
.feat { display: flex; align-items: center; height: 46px; padding-left: 11px; white-space: nowrap; }
.feat svg { width: 12px; height: 22px; }
.cs { width: 30px; height: 27px; border: 1px solid #888; border-radius: 3px; font-size: 18px; line-height: 26px; text-align: center; margin: 0 8px 0 20px; }
.rollback { height: 13px; margin: 16px 18px 0 9px; background: #b7b7b7; }
.parts { flex: 0 0 35%; min-height: 0; display: flex; border-top: 2px solid #d4d4d4; margin-right: 9px; }
.plist { flex: 1; min-width: 0; overflow: hidden; }
.scroll { width: 26px; background: #fafafa; display: flex; flex-direction: column; align-items: center; padding: 7px 0; }
.scroll svg { width: 16px; height: 13px; fill: #8b8b8b; }
.scroll i { width: 16px; height: 63px; border-radius: 8px; background: #8b8b8b; margin: 12px 0 auto; }

.canvas { flex: 1; min-width: 0; position: relative; }
.collapse { position: absolute; left: -2px; top: 795px; width: 58px; height: 60px; background: #fff; border: 1px solid #aaa; border-left: 0; }
.collapse svg { width: 34px; height: 32px; }
.model { width: 100%; height: 100%; }
.plane path { fill: #d9e6f2; fill-opacity: .25; stroke: #adc8e4; stroke-width: 3; }
.tint path { fill: #b9cbe0; fill-opacity: .04; }
.edge path { fill: none; stroke: #5c8fce; stroke-opacity: .6; stroke-width: 2; }
.ink { stroke: #111418; stroke-width: 2; fill-rule: evenodd; }
path.ink:not([fill]) { fill: none; }
.thin { stroke-opacity: .75; }
.dash path { fill: none; stroke: #b3b3b3; stroke-opacity: .8; stroke-width: 3; stroke-dasharray: 24 16; }
.wires { color: #a8a9ab; opacity: .9; }
.wire { fill: none; stroke: currentColor; stroke-width: 3; }
.dot { stroke: currentColor; stroke-width: 9; stroke-linecap: round; fill: none; }
.dots { stroke: #a8a9ab; stroke-width: 9; stroke-linecap: round; fill: none; }
.red { color: #b06a6a; opacity: .4; }
.lbl { font: 500 30px Roboto, sans-serif; fill: #3458b8; }
.dim { font-size: 24px; opacity: .5; }

.tabs { height: 49px; flex: none; background: #d4d4d4; display: flex; }
.add { width: 60px; margin-right: 8px; background: linear-gradient(#666, #666) center / 26px 4px no-repeat, linear-gradient(#666, #666) center / 4px 26px no-repeat; }
.tab { width: 350px; height: 47px; margin-right: 3px; justify-content: flex-start; gap: 8px; padding: 2px 0 0 18px; color: #666; background: #e9e9e9; border-radius: 0 0 8px 8px; box-shadow: 0 1px 2px #aaa; white-space: nowrap; }
.tab svg { width: 32px; height: 32px; }
.tab .st { width: 30px; }
.on { height: 49px; background: #fff; color: #333; border-bottom: 3px solid #1651b0; box-shadow: none; padding: 3px 0 0 21px; }
```
